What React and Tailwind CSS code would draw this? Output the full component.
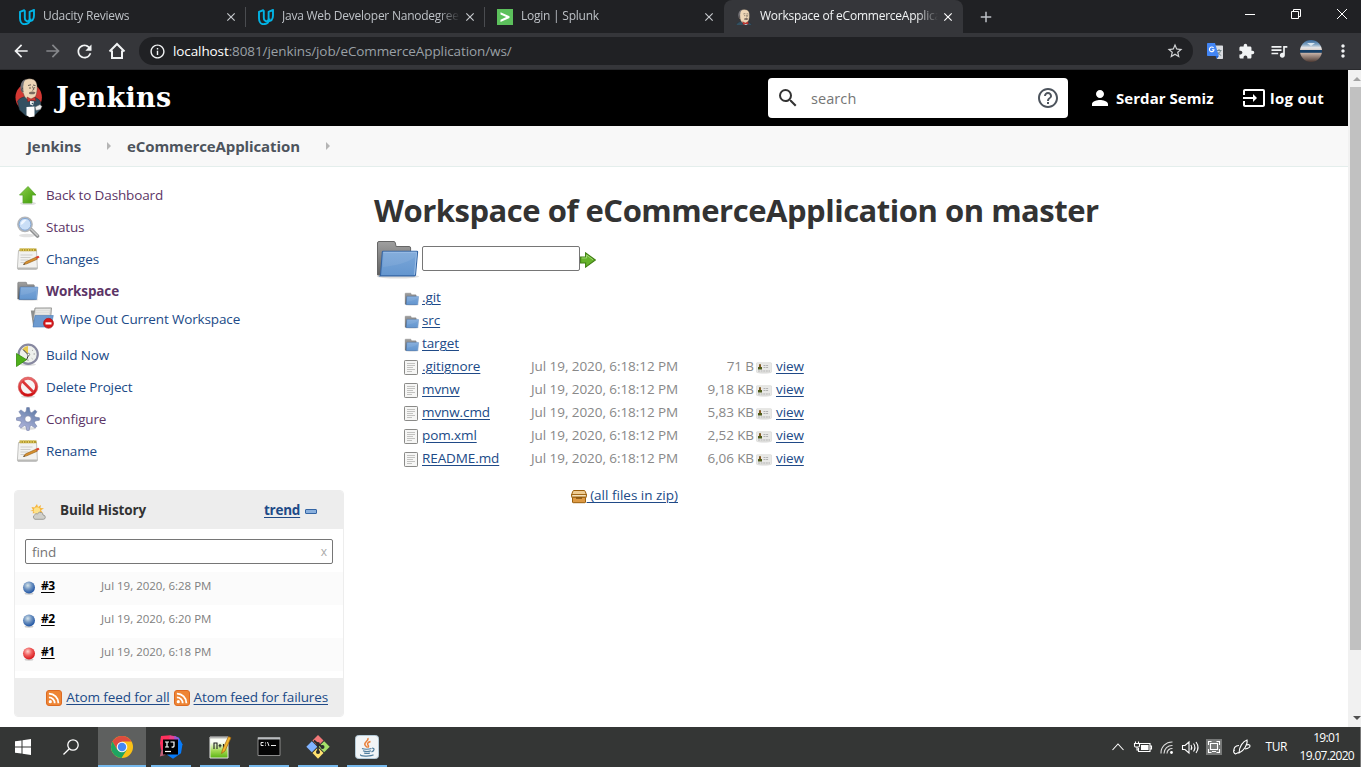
import React from "react";
import {
  MdArrowBack, MdArrowForward, MdRefresh, MdInfoOutline, MdStarBorder, MdExtension,
  MdQueueMusic, MdMoreVert, MdPerson, MdHelpOutline, MdSearch, MdInput, MdClose, MdAdd,
} from "react-icons/md";

const Udacity = () => (
  <svg width="16" height="16" viewBox="0 0 16 16" fill="none" stroke="#02b3e4" strokeWidth="1.9" strokeLinejoin="round">
    <path d="M5.8 1 1 2.8v6.4c0 3.6 1.800 6 4.300 6 3.700 0 6.200-2.200 6.200-5.600" />
    <path d="M5.800 1.200v7.300c0 2.400 1.200 3.800 3.600 3.800 3.400 0 5.600-2 5.600-5.800V.9l-4.400 1.900v6.700c0 1.500-.6 2.300-1.600 2.800" />
  </svg>
);

const Splunk = () => (
  <svg width="16" height="16" viewBox="0 0 16 16">
    <rect width="16" height="16" fill="#5cc05c" />
    <path d="M3.500 3.200 12.500 7.200v1.700L3.500 12.900v-2.200l5.700-2.600-5.700-2.600z" fill="#fff" />
  </svg>
);

const Butler = ({ w, h, box = "0 0 28 40", plain }) => (
  <svg width={w} height={h} viewBox={box}>
    {!plain && <ellipse cx="13.700" cy="19.500" rx="13.200" ry="14" fill="#d33833" />}
    <path d="M2.500 23c2.500-3 5.500-4 8-4.500l8 .5c4 1 6.500 3 7.500 6l-1 7-5 5-9 1-6.500-6z" fill="#335061" stroke="#1c2a33" strokeWidth=".5" />
    <path d="M7 14C5.500 8 7 1 14 .8c7-.3 8.500 4.700 8.100 10.200-.3 5-1.500 9.500-5.100 10.500-4.500 1-7.500-1.500-8.500-6z" fill="#eed6b7" stroke="#4a4039" strokeWidth=".4" />
    <path d="M6 13C4.500 7 6.500 2 11 1.200 8 4 9 6 8.200 8.500L8.500 14z" fill="#77757a" />
    <path d="M8 10c-2 0-1.500 4 .6 4M13 7.500l3-.7M18 7l2.500.6M17.500 8.500l1.300 3-1.500.8M14 10h2M19 9.800h1.200" stroke="#453f3b" strokeWidth=".8" fill="none" />
    <path d="M14 14.500q3-2 6.500-.2l-1 1.700q-2.500.8-5.500-.2z" fill="#7b6a60" />
    <path d="m12 19 4 2 4-2 .8 4-4-.8-4 1.500z" fill="#d33833" stroke="#7a1f1c" strokeWidth=".5" />
    <path d="m15 23 4 .4-1 4-3-1z" fill="#eee" />
    <circle cx="17.500" cy="25.500" r=".8" fill="#335061" />
    <path d="m11.500 29 8-.5v10l-5 .8-3-2z" fill="#fff" />
    <path d="m20 29 5-2.500 2 2-1.500 3-4.500 1z" fill="#eee" stroke="#555" strokeWidth=".5" />
  </svg>
);

const Translate = () => (
  <svg width="16" height="16" viewBox="0 0 16 16">
    <path d="M6 2.500h9.300a.7.7 0 0 1 .7.7v12a.7.7 0 0 1-.7.700H10z" fill="#dadce0" />
    <path d="M9.500 7.500h5M12 6v1.500M13.500 7.600c-.4 2.300-2 3.700-3.500 4.500M10.800 9c.8 1.800 2 2.800 3.400 3.500" stroke="#6b8085" strokeWidth=".9" fill="none" />
    <path d="M.7 0h7.300l3.800 13H.7A.7.700 0 0 1 0 12.300V.7C0 .3.300 0 .7 0z" fill="#4285f4" />
    <path d="m8.500 13 3.300 0-2 3z" fill="#1a5fd0" />
    <path d="M6.600 5A2.300 2.300 0 1 0 7 6.800H4.900" stroke="#fff" strokeWidth="1.100" fill="none" />
  </svg>
);

const Arrow = () => (
  <svg width="24" height="24" viewBox="0 0 24 24">
    <defs><linearGradient id="gr" x1="0" y1="0" x2="1" y2="1"><stop stopColor="#8ed04a" /><stop offset="1" stopColor="#3c9a06" /></linearGradient></defs>
    <ellipse cx="12" cy="20.500" rx="8" ry="1.600" fill="#dedede" />
    <path d="m12 3.500 8 8.500h-4v8H7v-8H3.500z" fill="url(#gr)" stroke="#58a62c" strokeWidth=".8" />
  </svg>
);

const Magnifier = () => (
  <svg width="24" height="24" viewBox="0 0 24 24">
    <ellipse cx="11" cy="20.500" rx="8" ry="1.700" fill="#e2e2e2" />
    <path d="m15 14.500 6.500 6.500" stroke="#8d8f90" strokeWidth="3.600" strokeLinecap="round" />
    <path d="m15.500 14.500 6 6" stroke="#c9caca" strokeWidth="1.500" strokeLinecap="round" />
    <circle cx="9" cy="9.300" r="7" fill="#c9def6" stroke="#b4b6b9" strokeWidth="1.800" />
    <circle cx="9" cy="9.300" r="5.900" fill="none" stroke="#7da3d2" strokeWidth=".9" />
    <path d="M4.700 10a4.500 4.500 0 0 1 6-5C9 6 8 9 4.700 10z" fill="#eff6ff" />
  </svg>
);

const Notepad = () => (
  <svg width="24" height="24" viewBox="0 0 24 24">
    <path d="M2.500 3.500h18l.9 17.500-1 1.400H2L1.400 21z" fill="#f2f2f0" stroke="#b5b5b2" strokeWidth=".8" />
    <path d="M1.500 20.500h20v1.700h-20z" fill="#b9b9b6" />
    <path d="M3.500 1.500h17v2.700h-17z" fill="#b39a2d" />
    <path d="M5 1.200v3m2.500-3v3m2.500-3v3m2.500-3v3m2.500-3v3m2.500-3v3" stroke="#e2cc62" />
    <path d="M4.500 8h12M4.500 10.500h10M4.500 13h8M4.500 15.500h4" stroke="#cececb" />
    <path d="m7.500 17.500 1.800-2.500 10.500-4.700 1.500 1.900-10.500 4.600z" fill="#d9912f" stroke="#8d5b17" strokeWidth=".6" />
    <path d="m19.300 10 3-1.300 1.300 1.600-2.200 1.500z" fill="#dc3b2b" />
    <path d="m7.300 17.700.8-1.300 1.200.9z" fill="#333" />
  </svg>
);

const Folder = ({ size }) => (
  <svg width={size} height={size} viewBox="0 0 48 48">
    <defs>
      <linearGradient id="fb" x1="0" y1="0" x2="0" y2="1"><stop stopColor="#7ba7d9" /><stop offset="1" stopColor="#6496cf" /></linearGradient>
      <linearGradient id="fg" x1="0" y1="0" x2="0" y2="1"><stop stopColor="#a0a0a0" /><stop offset="1" stopColor="#606060" /></linearGradient>
    </defs>
    <ellipse cx="24" cy="41.500" rx="21" ry="2" fill="#ddd" />
    <path d="M3.500 40V8q0-1.500 1.500-1.500h15q1 0 1.300 1.500l.8 3.500h13q1.500 0 1.500 1.500v27z" fill="url(#fg)" stroke="#666" />
    <path d="M6.500 40.500 8.300 17q.1-.8 1-.8h33.500q.9 0 .8.900L41.500 40q-.1.900-1 .900H6z" fill="url(#fb)" stroke="#3465a4" strokeWidth="1.100" />
    <path d="M9.300 17.300h33.200l-2 22.500" fill="none" stroke="#9dbfe6" />
    <path d="M9 32c10-1 25-4 32-10l1-4H9.500z" fill="#fff" opacity=".08" />
  </svg>
);

const WipeFolder = () => (
  <svg width="24" height="24" viewBox="0 0 24 24">
    <path d="M.8 3.500h4l14-2v18H3.200z" fill="#8d8f8e" />
    <path d="m5 1 16.500-.1-1 12H3z" fill="#d6d7d5" stroke="#8a8a88" strokeWidth=".8" />
    <path d="M6 2.800h14M6 4.800h13.500M5.500 6.800H19" stroke="#eeeeec" />
    <path d="M5 8.500h18.300l-2.500 11.500H3z" fill="#6d9bd0" stroke="#4d7db8" strokeWidth=".6" />
    <circle cx="18.500" cy="16.300" r="5" fill="#d5181b" stroke="#a41518" strokeWidth=".6" />
    <path d="M15.500 15.300h6v2.200h-6z" fill="#fff" />
  </svg>
);

const Clock = () => (
  <svg width="24" height="24" viewBox="0 0 24 24">
    <ellipse cx="12" cy="21.500" rx="8" ry="1.500" fill="#ddd" />
    <circle cx="12.200" cy="11.300" r="9.600" fill="#eef0ec" stroke="#8788a0" strokeWidth="2.200" />
    <path d="M12 11 6.500 6q2.500-3 5.500-3z" fill="#e8c94d" />
    <path d="M7 6.500 12.500 12l-2 5" stroke="#333" fill="none" strokeWidth="1" />
    <circle cx="12.500" cy="11.500" r="1.200" fill="#fff" stroke="#444" strokeWidth=".6" />
    <path d="M19 11h-1.500M12 18v-1.500M17 7l-.8.6M16.500 16l-.8-.7" stroke="#999" />
    <path d="M.5 10.500v13l10-6.800z" fill="#4fb01b" stroke="#348a0b" strokeWidth=".8" />
  </svg>
);

const Forbidden = () => (
  <svg width="24" height="24" viewBox="0 0 24 24">
    <defs><linearGradient id="rd" x1="0" y1="0" x2="0" y2="1"><stop stopColor="#e8686a" /><stop offset="1" stopColor="#cf0e10" /></linearGradient></defs>
    <ellipse cx="12" cy="21.700" rx="7" ry="1.300" fill="#ddd" />
    <circle cx="12" cy="11.800" r="8.400" fill="#f7f4f4" stroke="url(#rd)" strokeWidth="2.700" />
    <path d="m6.500 6.300 11 11" stroke="#db3436" strokeWidth="2.700" />
    <circle cx="12" cy="11.800" r="9.800" fill="none" stroke="#c8403f" strokeWidth=".5" />
  </svg>
);

const Gear = () => (
  <svg width="24" height="24" viewBox="0 0 24 24">
    <defs><linearGradient id="ge" x1=".7" y1="0" x2=".2" y2="1"><stop stopColor="#5f7ba6" /><stop offset="1" stopColor="#b5b8df" /></linearGradient></defs>
    <ellipse cx="12" cy="21.500" rx="8" ry="1.500" fill="#ddd" />
    <path d="m10.700.6 2.600 0 .8 4.400 1.700.7 3.300-2.800 1.800 1.900-2.500 3.500.7 1.700 4.300.8v2.400l-4.300.8-.7 1.800 2.500 3.400-1.800 1.900-3.500-2.500-1.700.7-.7 4.100h-2.400l-.8-4.100-1.700-.7-3.500 2.500-1.900-1.900 2.500-3.400-.7-1.800-4.200-.8v-2.400l4.200-.8.7-1.700-2.500-3.500 1.900-1.900 3.500 2.500 1.700-.7z" fill="url(#ge)" stroke="#7480a8" strokeWidth=".6" />
    <circle cx="12" cy="12" r="3.300" fill="#fff" stroke="#7882a8" strokeWidth=".8" />
  </svg>
);

const Weather = () => (
  <svg width="16" height="16" viewBox="0 0 16 16">
    <path d="m7 0 1 3 3-2-.6 3 3.600.3-3 2 2 3H2.500l1-2L.2 7l2.800-1-1.500-3 3 .6z" fill="#f6b63d" />
    <circle cx="7" cy="6.500" r="3.200" fill="#fde28a" />
    <path d="M5 15.300a2.500 2.500 0 0 1-.3-4.500q.8-1.600 2.800-1 1.500-2.500 4-1.300 1.700.8 1.500 2.500 2.300.2 2.300 2.200 0 2-2 2.100z" fill="#cfcfca" stroke="#8d8d88" strokeWidth=".8" />
  </svg>
);

const Ball = ({ red }) => (
  <svg width="14" height="14" viewBox="0 0 14 14">
    <defs>
      <radialGradient id="bb" cx=".4" cy=".32" r=".65"><stop stopColor="#d5e4ea" /><stop offset=".5" stopColor="#7195c2" /><stop offset="1" stopColor="#2458a5" /></radialGradient>
      <radialGradient id="rb" cx=".4" cy=".32" r=".65"><stop stopColor="#ffd5d0" /><stop offset=".5" stopColor="#f0605f" /><stop offset="1" stopColor="#d81c20" /></radialGradient>
    </defs>
    <ellipse cx="7" cy="12.600" rx="4.500" ry="1.200" fill="#ccc" />
    <circle cx="7" cy="6.600" r="6" fill={red ? "url(#rb)" : "url(#bb)"} />
  </svg>
);

const Rss = () => (
  <svg width="16" height="16" viewBox="0 0 16 16">
    <rect x=".5" y=".5" width="15" height="15" rx="2.500" fill="#ee8535" stroke="#dd6a22" />
    <circle cx="4.300" cy="11.700" r="1.600" fill="#fff" />
    <path d="M2.900 7.300a5.800 5.800 0 0 1 5.800 5.900M2.900 3.600a9.500 9.500 0 0 1 9.500 9.600" fill="none" stroke="#fff" strokeWidth="1.800" />
  </svg>
);

const GoArrow = () => (
  <svg width="16" height="16" viewBox="0 0 16 16">
    <path d="M.6 5h5V.9L15.300 8 5.600 15.100V11h-5z" fill="#66b32b" stroke="#3f7f12" strokeWidth="1.100" />
    <path d="M1.600 6h5V3l6.500 4.800" fill="none" stroke="#a5da7b" strokeWidth=".9" />
  </svg>
);

const Doc = () => (
  <svg width="14" height="15" viewBox="0 0 14 15">
    <rect x=".5" y=".5" width="13" height="14" rx=".7" fill="#f6f6f5" stroke="#8a8a88" />
    <path d="M3 3.500h8M3 5.500h8M3 7.500h6M3 9.500h8M3 11.500h5" stroke="#c2c2c0" strokeWidth="1" />
  </svg>
);

const Card = () => (
  <svg width="16" height="12" viewBox="0 0 16 12">
    <ellipse cx="8" cy="11" rx="6" ry=".8" fill="#e5e5e5" />
    <rect x=".4" y=".7" width="15.200" height="9.800" rx="1" fill="#e9e9e7" stroke="#d3d3d0" strokeWidth=".6" />
    <path d="M2 7.500V5h1V2.500h2V5h1v2.500z" fill="#4e5c1c" /><path d="M3 2.500h2V5H3z" fill="#8a5a25" />
    <path d="M7.500 3.500h5M7.500 5.500h5M2 9h12" stroke="#aaa" strokeWidth=".9" strokeDasharray="2 .6" />
  </svg>
);

const Zip = () => (
  <svg width="16" height="16" viewBox="0 0 16 16">
    <path d="M3 2.500h10q1 0 1.300 1L15.500 7v1H.5V7l1.200-3.500q.3-1 1.300-1z" fill="#eecb91" stroke="#9b5e0b" />
    <rect x=".7" y="6.500" width="14.600" height="2.600" fill="#f5e2bd" stroke="#9b5e0b" strokeWidth=".9" />
    <path d="M1.500 9.300h13V14q0 .7-.7.700H2.200q-.7 0-.7-.7z" fill="#dd9a45" stroke="#9b5e0b" />
    <path d="M5 9.500h6v1.200H5z" fill="#7a4908" />
  </svg>
);

const Tab = ({ icon, title, active, sep }) => (
  <div className={`relative flex h-[33px] w-[239px] shrink-0 items-center pl-3 ${active ? "rounded-t-lg bg-[#35363a]" : ""}`}>
    {icon}
    <div className={`ml-2 w-[178px] shrink-0 overflow-hidden whitespace-nowrap pb-px font-['Open_Sans',sans-serif] text-[12px] tracking-[-0.24px] [mask-image:linear-gradient(to_right,black_88%,transparent)] ${active ? "text-[#f1f3f4]" : "text-[#bdc1c6]"}`}>{title}</div>
    <MdClose className={`ml-[3px] shrink-0 ${active ? "text-white" : "text-[#c6c9cd]"}`} size={14} />
    {sep && <i className="absolute right-0 top-[7px] h-5 w-px bg-[#4a4c50]" />}
  </div>
);

const Task = ({ icon, label, color = "text-[#204a87]" }) => (
  <a className={`flex h-8 items-center gap-[6px] ${color}`}>{icon}<span>{label}</span></a>
);

const files = [
  [".git"], ["src"], ["target"],
  [".gitignore", "71 B"], ["mvnw", "9,18 KB"], ["mvnw.cmd", "5,83 KB"], ["pom.xml", "2,52 KB"], ["README.md", "6,06 KB"],
];
const builds = [["#3", "6:28"], ["#2", "6:20"], ["#1", "6:18"]];

const TaskIcon = ({ children, active }) => (
  <div className={`mr-px flex h-10 w-12 flex-col items-center ${active ? "bg-[#5e605f]" : ""}`}>
    <div className="flex h-[38px] items-center pt-[2px]">{children}</div>
    <div className={`h-[2px] bg-[#76b9ed] ${active ? "w-12" : "w-10"}`} />
  </div>
);

const Chrome = () => (
  <svg width="24" height="24" viewBox="0 0 24 24">
    <circle cx="12" cy="12" r="11" fill="#fbc116" />
    <path d="M2.500 6.500A11 11 0 0 1 21.500 6.500H12L7.200 14.700z" fill="#dd4b3e" />
    <path d="M2.500 6.500A11 11 0 0 0 11.500 23l5.300-8.300H7.200z" fill="#1da462" />
    <circle cx="12" cy="12" r="5.300" fill="#f5f5f5" /><circle cx="12" cy="12" r="4.200" fill="#4587f3" />
  </svg>
);

const Intellij = () => (
  <svg width="24" height="24" viewBox="0 0 24 24">
    <path d="m2 1 9-.8 4 5L6 12 1 8z" fill="#fe315d" />
    <path d="M4 9 .8 21.500 6 20l4-5z" fill="#c2617a" /><path d="M1 8l5-1v7l-4 1z" fill="#fe315d" />
    <path d="m15 .8 5 2 3.500 6.500-1.500 9-8 5.500-6-4z" fill="#087cfa" /><path d="m11 .2 6 1.300-1 4-6-1z" fill="#e8408c" />
    <path d="m15.500 1 4.500 2-1 5-4-3z" fill="#9b56d0" />
    <path d="M4 4.500h15v15H4z" fill="#000" />
    <path d="M6 7h4M8 7v5M6 12h4M11.500 7h3.500v4q0 1.300-2.500 1" stroke="#fff" strokeWidth="1.200" fill="none" />
    <path d="M6 16.500h6" stroke="#fff" strokeWidth="1.200" />
  </svg>
);

const Notepadpp = () => (
  <svg width="24" height="24" viewBox="0 0 24 24">
    <defs><linearGradient id="np" x1="0" y1="0" x2="0" y2="1"><stop offset=".25" stopColor="#fafcf4" /><stop offset=".65" stopColor="#a4da54" /><stop offset="1" stopColor="#59b312" /></linearGradient></defs>
    <path d="M2 2h18v21H2z" fill="url(#np)" stroke="#e5e5e5" />
    <path d="M2.500 2.500h17" stroke="#777" strokeWidth="2" strokeDasharray="1 1" />
    <path d="M6 14V8h3v6M12 9v3.500M10.500 10.700h3M15.500 9v3.500" stroke="#222" strokeWidth="1.100" fill="none" />
    <path d="m13.500 18.500 1-4 6-13 2.500 1.200L17 16z" fill="#f0b52d" stroke="#9b6010" strokeWidth=".7" />
  </svg>
);

const Cmd = () => (
  <svg width="24" height="24" viewBox="0 0 24 24">
    <path d="M1 2.500h22v18H1z" fill="#050505" stroke="#8c8c8c" /><path d="M1 2.500h22V4.500H1z" fill="#b8bcbf" />
    <path d="M6.500 7.500H4v3h2.500M8.500 7.500v1M8.500 9.700v1M10.500 7l1.500 4M14 10.500h5" stroke="#eee" fill="none" />
  </svg>
);

const GitBash = () => (
  <svg width="24" height="24" viewBox="0 0 24 24">
    <path d="m12 0 5.500 5.500-5.500 5.500-5.500-5.500z" fill="#f27878" /><path d="m5.800 6.300 5.500 5.500-5.500 5.500L.3 11.800z" fill="#80b3ff" />
    <path d="m18.200 6.300 5.500 5.500-5.500 5.500-5.500-5.500z" fill="#a5e06a" /><path d="m12 12.600 5.500 5.500-5.500 5.600-5.500-5.600z" fill="#ffe270" />
    <path d="M8 5.500 12 9l5 3.500M12 8v10" stroke="#2a2c2b" strokeWidth="1.700" fill="none" />
    <circle cx="12" cy="9" r="1.900" fill="#2a2c2b" /><circle cx="16.500" cy="12" r="2" fill="#2a2c2b" /><circle cx="12" cy="17" r="2" fill="#2a2c2b" />
  </svg>
);

const Java = () => (
  <svg width="24" height="24" viewBox="0 0 24 24" fill="none">
    <rect x=".5" y=".5" width="23" height="23" rx="3" fill="#f1f5f7" stroke="#b4cbd8" />
    <path d="M13 3c1 3-4.500 4.200-3 7 .5 1 1.500 1.500 2 2.500M15.500 6.500c-3 1-3.500 2-2.500 3.500 1 1.300.5 2-.5 2.700" stroke="#e9803a" strokeWidth="1.500" />
    <path d="M7 13.500c2 1 7 1 9.500 0M8 15.800c2 .8 6 .8 8 0M9 18c2 .6 4.500.6 6 0M17 13c3 0 2.500 3-.5 3.800M6 19.500c-3 1.800 10 2.200 12.500.3" stroke="#4f7e9e" strokeWidth="1.200" />
  </svg>
);

export default function App() {
  return (
    <div className="flex h-[767px] w-[1361px] flex-col overflow-hidden bg-white font-['Open_Sans',sans-serif]">
      <div className="flex h-[33px] items-center bg-[#202124] pl-[7px]">
        <Tab icon={<Udacity />} title="Udacity Reviews" sep />
        <Tab icon={<Udacity />} title="Java Web Developer Nanodegree" sep />
        <Tab icon={<Splunk />} title="Login | Splunk" />
        <Tab icon={<Butler w={16} h={16} box="3 0 22 24" plain />} title="Workspace of eCommerceApplication" active />
        <MdAdd className="ml-[14px] text-[#bdc1c6]" size={18} />
        <svg className="ml-auto mr-[14px] mb-[6px]" width="103" height="12" fill="none" stroke="#fff">
          <path d="M1 6.500h10" />
          <path d="M47.500 3.500h7v7h-7zM49.500 3.500v-2h7v7h-2M93 1l10 10M103 1 93 11" />
        </svg>
      </div>

      <div className="flex h-[37px] items-center border-b border-[#292a2d] bg-[#35363a] text-[#f1f3f4]">
        <MdArrowBack size={20} className="ml-[11px]" />
        <MdArrowForward size={20} className="ml-[12px] text-[#85878a]" />
        <MdRefresh size={21} className="ml-[11px]" />
        <svg className="ml-[13px]" width="18" height="18" fill="none" stroke="#f1f3f4" strokeWidth="2"><path d="M1.500 9.500 9 2l7.500 7.500M4 8.500V16h10V8.500" /></svg>
        <div className="ml-[13px] flex h-7 w-[1054px] items-center rounded-full bg-[#202124] pl-[10px] pr-[9px]">
          <MdInfoOutline size={17} />
          <span className="ml-[7px] text-[13.500px] tracking-[-0.1px] text-[#9aa0a6]"><span className="text-white">localhost</span>:8081/jenkins/job/eCommerceApplication/ws/</span>
          <MdStarBorder className="ml-auto text-[#d2d4d6]" size={18} />
        </div>
        <div className="ml-[14px]"><Translate /></div>
        <MdExtension className="ml-[15px]" size={17} />
        <MdQueueMusic className="ml-[14px]" size={20} />
        <svg className="ml-[11px]" width="22" height="22" viewBox="0 0 22 22">
          <defs>
            <clipPath id="av"><circle cx="11" cy="11" r="11" /></clipPath>
            <linearGradient id="ag" x1="0" y1="0" x2="0" y2="1">
              <stop offset="0" stopColor="#38689a" /><stop offset=".2" stopColor="#7fa3c2" /><stop offset=".35" stopColor="#e8e6e6" /><stop offset=".44" stopColor="#d9d0cb" />
              <stop offset=".47" stopColor="#153e66" /><stop offset=".56" stopColor="#153e66" /><stop offset=".6" stopColor="#c5b0a5" /><stop offset="1" stopColor="#4d3a33" />
            </linearGradient>
          </defs>
          <g clipPath="url(#av)"><path d="M0 0h22v22H0z" fill="url(#ag)" /><path d="M7 3h8l-4 3z" fill="#dbe7f0" /></g>
        </svg>
        <MdMoreVert className="ml-[11px]" size={20} />
      </div>

      <div className="flex h-[657px]">
        <div className="flex w-[1348px] flex-col tracking-[-0.1px]">
          <header className="flex h-14 shrink-0 items-center bg-black pl-[15px] text-white">
            <Butler w={28} h={40} />
            <span className="ml-[13px] w-[712px] font-['DejaVu_Serif',serif] text-[27px] font-bold leading-8 tracking-[0.3px]">Jenkins</span>
            <div className="flex h-10 w-[300px] items-center rounded-[4px] bg-white pl-[8px] pr-[8px] text-[#4d545d]">
              <MdSearch size={24} className="text-[#333]" />
              <span className="ml-[11px] pt-px text-[14.500px] tracking-[0.08px] text-[#757575]">search</span>
              <MdHelpOutline size={24} className="ml-auto" />
            </div>
            <MdPerson size={24} className="ml-[20px]" />
            <span className="ml-[4px] w-[122px] whitespace-nowrap text-[15px] font-bold tracking-[0.05px]">Serdar Semiz</span>
            <MdInput size={24} className="ml-1" />
            <span className="ml-[4px] whitespace-nowrap text-[15px] font-bold tracking-[0.3px]">log out</span>
          </header>
          <nav className="flex h-[41px] shrink-0 items-center border-b border-[#e4eeec] bg-[#f8f8f8] pl-[27px] text-[15px] font-bold text-[#4d545d]">
            <span className="w-[80px]">Jenkins</span>
            <i className="mr-[16px] border-y-[4px] border-l-[4px] border-y-transparent border-l-[#b5b5b5]" />
            <span className="w-[199px]">eCommerceApplication</span>
            <i className="border-y-[4px] border-l-[4px] border-y-transparent border-l-[#b5b5b5]" />
          </nav>
          <div className="flex">
            <aside className="w-[374px] shrink-0 pl-[14px] pt-3 text-[13.500px]">
              <div className="pl-[2px] tracking-[-0.14px]">
                <Task icon={<Arrow />} label="Back to Dashboard" color="text-[#5c3566]" />
                <Task icon={<Magnifier />} label="Status" color="text-[#5c3566]" />
                <Task icon={<Notepad />} label="Changes" />
                <Task icon={<Folder size={24} />} label={<b>Workspace</b>} color="text-[#5c3566]" />
                <div className="mb-2 ml-[14px] flex h-6 items-center gap-[6px] text-[#204a87]"><WipeFolder />Wipe Out Current Workspace</div>
                <Task icon={<Clock />} label="Build Now" />
                <Task icon={<Forbidden />} label="Delete Project" />
                <Task icon={<Gear />} label="Configure" color="text-[#5c3566]" />
                <Task icon={<Notepad />} label="Rename" />
              </div>
              <section className="mt-[23px] w-[330px] overflow-hidden rounded-[4px] border border-[#ededed] bg-white">
                <div className="flex h-[38px] items-center bg-[#ededed] pl-[15px] font-bold text-[#333]">
                  <div className="pt-1"><Weather /></div>
                  <span className="ml-[14px] w-[204px]">Build History</span>
                  <a className="tracking-[-0.25px] text-[#204a87] underline underline-offset-2">trend</a>
                  <i className="ml-[5px] mt-[3px] h-[5px] w-3 rounded-[1px] border border-[#3465a4] bg-[#8ab0dd]" />
                </div>
                <div className="mx-[10px] mb-2 mt-[10px] flex h-[25px] items-center justify-between rounded-[2px] border border-[#767676] px-[5px] text-[#757575]"><span className="pl-px pt-px">find</span><span className="text-[12px] text-[#aaa]">x</span></div>
                {builds.map(([n, t], i) => (
                  <div key={n} className={`flex h-[33px] items-center pb-[5px] pl-[7px] text-[12px] ${i % 2 ? "" : "bg-[#fbfbfb]"}`}>
                    <div className="pt-[3px]"><Ball red={n === "#1"} /></div>
                    <b className="ml-[5px] w-[60px] font-bold tracking-[-0.5px] text-black underline underline-offset-2">{n}</b>
                    <span className="text-[11.500px] tracking-[0px] text-[#808080]">Jul 19, 2020, {t} PM</span>
                  </div>
                ))}
                <div className="mt-[7px] flex h-[38px] items-center justify-end gap-[4px] bg-[#ededed] pr-[15px] pt-[2px] text-[#204a87]">
                  <Rss /><a className="-mt-px underline underline-offset-2">Atom feed for all</a><Rss /><a className="-mt-px tracking-[-0.13px] underline underline-offset-2">Atom feed for failures</a>
                </div>
              </section>
            </aside>
            <main className="text-[13.500px] text-[#204a87]">
              <h1 className="mt-[22px] h-[44px] whitespace-nowrap text-[31px] font-bold leading-[43px] tracking-[-0.48px] text-[#333]">Workspace of eCommerceApplication on master</h1>
              <div className="mt-[2px] flex h-12 items-center">
                <Folder size={48} />
                <div className="mb-[2px] h-[25px] w-[158px] rounded-[2px] border border-[#767676] bg-white" />
                <div className="pt-[2px]"><GoArrow /></div>
              </div>
              <div className="mt-[3px]">
                {files.map(([name, size]) => (
                  <div key={name} className="flex h-[23px] items-center pl-[30px]">
                    <div className="w-[18px] pt-[2px]">{size ? <Doc /> : <Folder size={16} />}</div>
                    <div className="w-[109px]"><a className="underline underline-offset-2">{name}</a></div>
                    {size && <>
                      <span className="w-[147px] whitespace-nowrap text-right tracking-[-0.06px] text-[#888]">Jul 19, 2020, 6:18:12 PM</span>
                      <span className="w-[76px] text-right text-[#888]">{size}</span>
                      <div className="ml-[2px] w-5 pt-[2px]"><Card /></div>
                      <a className="underline underline-offset-2">view</a>
                    </>}
                  </div>
                ))}
              </div>
              <div className="mt-[14px] flex h-[23px] w-[304px] items-center justify-end"><Zip /><a className="whitespace-pre tracking-[0px] underline underline-offset-2"> (all files in zip)</a></div>
            </main>
          </div>
        </div>
        <div className="flex w-[13px] flex-col bg-[#f1f1f1]">
          <i className="ml-[5px] mt-[7px] border-x-[4px] border-b-[4px] border-x-transparent border-b-[#a3a3a3]" />
          <div className="ml-[2px] mt-[6px] h-[563px] bg-[#c1c1c1]" />
          <i className="ml-[5px] mt-[66px] border-x-[4px] border-t-[4px] border-x-transparent border-t-[#505050]" />
        </div>
      </div>

      <footer className="flex h-10 items-center border-r border-[#777] bg-[#343635] text-white">
        <svg className="ml-[15px]" width="16" height="16" fill="#fff"><path d="M0 2.300 6.500 1.400v6.100H0zM7.500 1.200 16 0v7.500H7.500zM0 8.500h6.500v6.100L0 13.700zM7.500 8.500H16V16l-8.500-1.200z" /></svg>
        <svg className="ml-8 mr-[19px]" width="16" height="16" fill="none" stroke="#fff" strokeWidth="1.300"><circle cx="10" cy="6" r="5.200" /><path d="M6.300 9.700.5 15.500" /></svg>
        <TaskIcon active><Chrome /></TaskIcon>
        <TaskIcon><Intellij /></TaskIcon>
        <TaskIcon><Notepadpp /></TaskIcon>
        <TaskIcon><Cmd /></TaskIcon>
        <TaskIcon><GitBash /></TaskIcon>
        <TaskIcon><Java /></TaskIcon>
        <svg className="ml-auto" width="140" height="20" viewBox="0 0 140 20" fill="none" stroke="#fff" strokeWidth="1.100">
          <path d="m.5 13 5.500-6 5.500 6" />
          <path d="M27.500 6.500H38v8H26.500V11M38 9h1.500v3H38M22.500 6.500h5v2q0 1.500-1 1.500h-3q-1 0-1-1.500zM23.500 4.500v2M26.500 4.500v2M25 10v3h1.500" />
          <path d="M29.500 8.500H36v4h-6.500z" fill="#fff" />
          <path d="M49 16.500A11 11 0 0 1 60.500 5M52 16.500A8 8 0 0 1 60.500 8.500M55 16.500A5 5 0 0 1 60.500 11.500" stroke="#ddd" />
          <circle cx="59.500" cy="15.500" r="1.400" fill="#fff" stroke="none" />
          <path d="M70.500 8.500H73L77 5v11l-4-3.500h-2.500zM79 8q1.500 2.500 0 5M81.500 6.500q2.800 4 0 8M84 5q4 5.500 0 11" />
          <path d="M94 2h16v16H94z" fill="#777978" stroke="none" />
          <path d="M96.500 8V4.500h3M104.500 4.500h3V8M107.500 12v3.500h-3M99.500 15.500h-3V12M98.500 6.500h7v6h-7zM100 14.500h4" />
          <path d="M127 16c5-2 9-9 8-13-4 1-8 7-8 13zM127 8.500c-4 0-6 3-4.500 5.500M122 12.500c-1 2 0 4 1.500 4.500l3-1.500M134 8q4-1 4 1t-5 3" />
        </svg>
        <span className="ml-[14px] w-[34px] text-[12px] tracking-[-0.5px]">TUR</span>
        <div className="mr-[6px] text-center text-[12px] leading-[18px] tracking-[-0.68px]"><div>19:01</div><div>19.07.2020</div></div>
      </footer>
    </div>
  );
}
